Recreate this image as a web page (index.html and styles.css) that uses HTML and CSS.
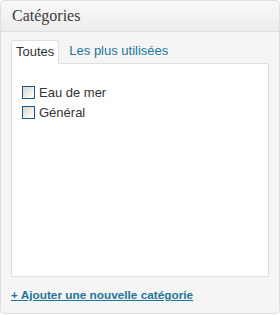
FILE: index.html
```html
<!DOCTYPE html>
<html lang="fr">
<head>
    <meta charset="UTF-8">
    <title>Catégories</title>
    <link rel="stylesheet" href="styles.css">
</head>
<body>
    <div class="postbox">
        <h3 class="postbox-title">Catégories</h3>
        <div class="inside">
            <ul class="tabs">
                <li class="tab active">Toutes</li>
                <li class="tab"><a href="#">Les plus utilisées</a></li>
            </ul>
            <div class="panel">
                <ul class="checklist">
                    <li><span class="checkbox"></span>Eau de mer</li>
                    <li><span class="checkbox"></span>Général</li>
                </ul>
            </div>
            <div class="add-new">
                <a href="#">+ Ajouter une nouvelle catégorie</a>
            </div>
        </div>
    </div>
</body>
</html>
```

FILE: styles.css
```css
/* Reset */
body, h3, ul, li, div, a {
    margin: 0;
    padding: 0;
}

body {
    font-family: "Liberation Sans", Arial, sans-serif;
    font-size: 13px;
    color: #333;
    background-color: #ffffff;
}

a {
    color: #21759b;
    text-decoration: none;
}

/* Box */
.postbox {
    width: 280px;
    height: 314px;
    box-sizing: border-box;
    border: 1px solid #dfdfdf;
    border-radius: 4px;
    background-color: #f5f5f5;
    overflow: hidden;
}

.postbox-title {
    height: 30px;
    line-height: 30px;
    padding-left: 11px;
    border-bottom: 1px solid #dfdfdf;
    background: linear-gradient(#f9f9f9, #ececec);
    font-family: "Liberation Serif", "Times New Roman", serif;
    font-weight: normal;
    font-size: 16px;
    color: #3c3c3c;
}

.inside {
    padding: 8px 10px 0;
}

/* Tabs */
.tabs {
    list-style: none;
    display: flex;
    align-items: flex-start;
    height: 23px;
}

.tab {
    height: 23px;
    line-height: 22px;
    padding: 0 4px;
    margin-right: 6px;
}

.tab.active {
    position: relative;
    height: 23px;
    border: 1px solid #dfdfdf;
    border-bottom: none;
    border-radius: 3px 3px 0 0;
    background-color: #fff;
}

/* Panel */
.panel {
    height: 214px;
    box-sizing: border-box;
    border: 1px solid #dfdfdf;
    background-color: #fff;
}

.checklist {
    list-style: none;
    padding: 18px 0 0 10px;
}

.checklist li {
    display: flex;
    align-items: center;
    height: 20px;
}

.checkbox {
    width: 11px;
    height: 11px;
    margin-right: 4px;
    border: 1px solid #1d5587;
    background: linear-gradient(135deg, #d6d6ce, #f4f4f2 70%, #fff);
}

/* Add new */
.add-new {
    padding-top: 9px;
    line-height: 18px;
}

.add-new a {
    font-size: 11.8px;
    font-weight: bold;
    text-decoration: underline;
}
```
